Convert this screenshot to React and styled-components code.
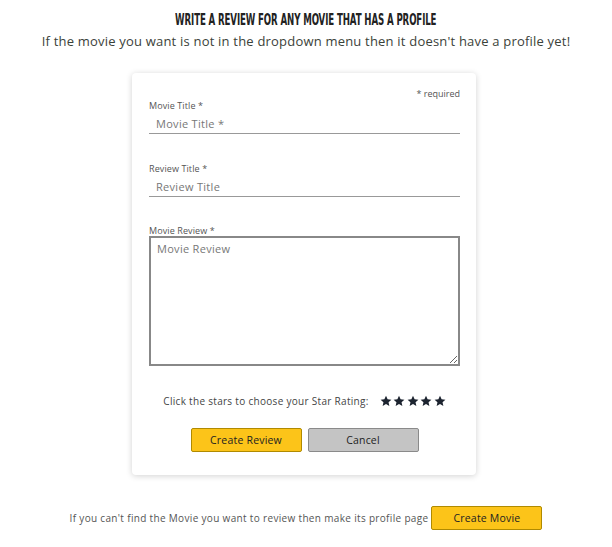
import React from "react";
import styled, { createGlobalStyle } from "styled-components";

const Global = createGlobalStyle`
  body {
    margin: 0;
    background: #fff;
    font-family: "Open Sans", "Liberation Sans", sans-serif;
    color: #333;
  }
`;

const Page = styled.div`
  display: flex;
  flex-direction: column;
  align-items: center;
  padding-top: 11px;
`;

const Heading = styled.h1`
  margin: 0;
  font-family: "DejaVu Sans Condensed", "DejaVu Sans", sans-serif;
  font-stretch: condensed;
  font-weight: 700;
  font-size: 16px;
  line-height: 18px;
  letter-spacing: -0.2px;
  text-transform: uppercase;
  color: #222;
  transform: scaleX(0.6);
  white-space: nowrap;
`;

const Sub = styled.p`
  margin: 3px 0 0;
  font-size: 13px;
  letter-spacing: 0.2px;
  color: #3b4239;
`;

const Card = styled.form`
  width: 344px;
  box-sizing: border-box;
  margin: 23px 0 0 -4px;
  padding: 15px 16px 23px 17px;
  background: #fff;
  border-radius: 4px;
  box-shadow: 0 1px 6px rgba(0, 0, 0, 0.18);
  display: flex;
  flex-direction: column;
`;

const Required = styled.div`
  align-self: flex-end;
  font-size: 9px;
  line-height: 11px;
  color: #555;
  margin-bottom: 1px;
`;

const Field = styled.label`
  display: flex;
  flex-direction: column;
  margin-bottom: ${(p) => p.$gap || 0}px;
`;

const Label = styled.span`
  font-size: 9px;
  line-height: 11px;
  color: #555;
  letter-spacing: 0.1px;
`;

const Input = styled.input`
  border: none;
  border-bottom: 1px solid #999;
  outline: none;
  font-family: inherit;
  font-size: 11px;
  letter-spacing: 0.3px;
  padding: 5px 7px 2px;
  &::placeholder {
    color: #777;
  }
`;

const Area = styled.textarea`
  height: 130px;
  box-sizing: border-box;
  border: 2px solid #888;
  outline: none;
  font-family: inherit;
  font-size: 11px;
  letter-spacing: 0.3px;
  padding: 3px 6px;
  margin-top: 0;
  resize: vertical;
  &::placeholder {
    color: #777;
  }
`;

const RatingRow = styled.div`
  display: flex;
  align-items: center;
  justify-content: center;
  gap: 11px;
  margin-top: 28px;
  font-size: 10px;
  letter-spacing: 0.3px;
  color: #444;
`;

const Stars = styled.div`
  display: flex;
  gap: 1.5px;
`;

const Buttons = styled.div`
  display: flex;
  justify-content: center;
  gap: 6px;
  margin-top: 20px;
`;

const Button = styled.button`
  width: ${(p) => p.$w || 111}px;
  height: 24px;
  border: 1px solid ${(p) => (p.$grey ? "#8a8a8a" : "#b08a00")};
  border-radius: 2px;
  background: ${(p) => (p.$grey ? "#c4c4c4" : "#fcc419")};
  font-family: inherit;
  font-size: 10.5px;
  letter-spacing: 0.2px;
  color: #222;
  cursor: pointer;
`;

const Footer = styled.div`
  display: flex;
  align-items: center;
  gap: 3px;
  margin-top: 31px;
  font-size: 10px;
  letter-spacing: 0.33px;
  color: #555;
`;

const Star = () => (
  <svg width="12" height="12" viewBox="0 0 24 24">
    <path
      fill="#1d2430"
      d="M12 1.5l3.2 7 7.6.8-5.7 5.1 1.6 7.6L12 18.1 5.3 22l1.6-7.6L1.2 9.3l7.6-.8z"
    />
  </svg>
);

export default function App() {
  return (
    <Page>
      <Global />
      <Heading>Write a review for any movie that has a profile</Heading>
      <Sub>If the movie you want is not in the dropdown menu then it doesn't have a profile yet!</Sub>
      <Card>
        <Required>* required</Required>
        <Field $gap={29}>
          <Label>Movie Title *</Label>
          <Input placeholder="Movie Title *" />
        </Field>
        <Field $gap={28}>
          <Label>Review Title *</Label>
          <Input placeholder="Review Title" />
        </Field>
        <Field>
          <Label>Movie Review *</Label>
          <Area placeholder="Movie Review" />
        </Field>
        <RatingRow>
          <span>Click the stars to choose your Star Rating:</span>
          <Stars>
            {[0, 1, 2, 3, 4].map((i) => (
              <Star key={i} />
            ))}
          </Stars>
        </RatingRow>
        <Buttons>
          <Button type="button">Create Review</Button>
          <Button type="button" $grey>Cancel</Button>
        </Buttons>
      </Card>
      <Footer>
        <span>If you can't find the Movie you want to review then make its profile page</span>
        <Button type="button" $w={111}>Create Movie</Button>
      </Footer>
    </Page>
  );
}
